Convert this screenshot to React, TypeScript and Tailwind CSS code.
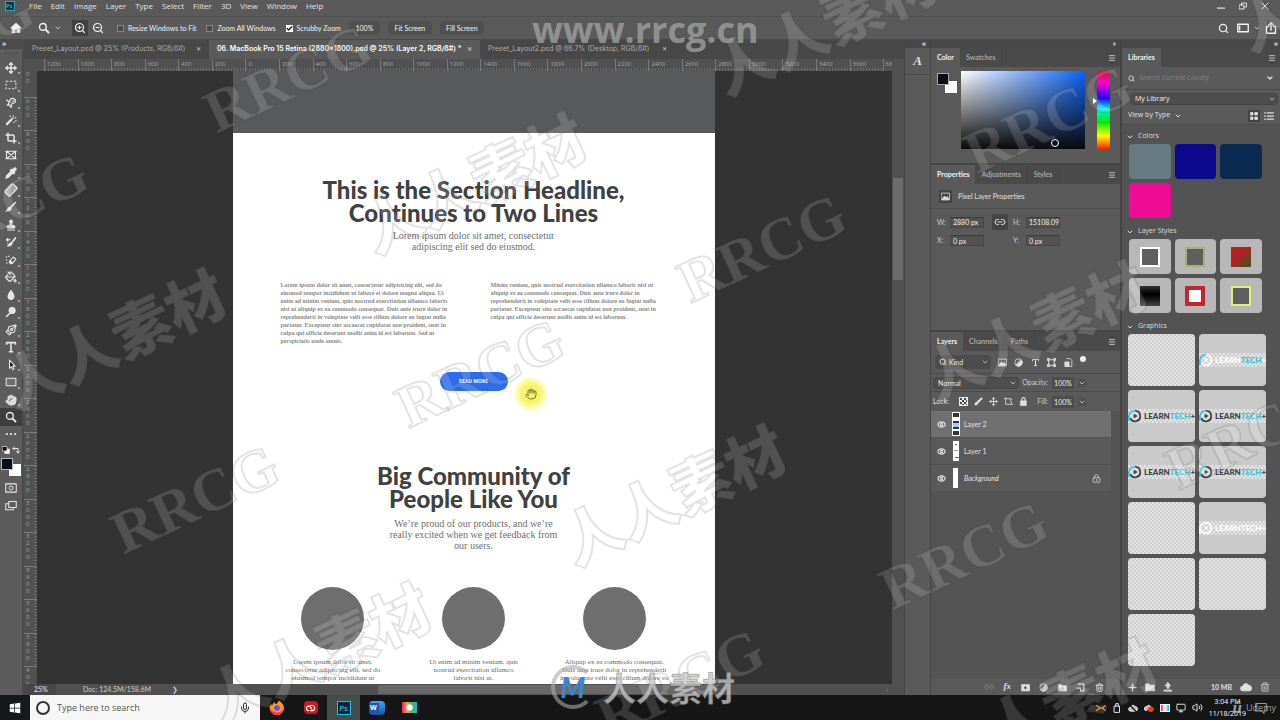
import type { ReactNode } from "react";
import {
  Bandage,
  Brush,
  Check,
  ChevronDown,
  Crop,
  Eye,
  Hand,
  Lasso,
  Link2,
  LockKeyhole,
  Menu,
  Mic,
  Monitor,
  Move,
  PaintBucket,
  PenTool,
  Pipette,
  Search,
  Stamp,
  Trash2,
  Type,
  Volume2,
  ZoomIn,
  ZoomOut,
} from "lucide-react";

const checker =
  "bg-[repeating-conic-gradient(#cdcdcd_0_25%,#e4e4e4_0_50%)] bg-[length:4px_4px]";

function Glyph({ children, className = "w-3 h-3" }: { children: ReactNode; className?: string }) {
  return (
    <svg
      aria-hidden
      viewBox="0 0 16 16"
      className={className}
      fill="none"
      stroke="currentColor"
      strokeWidth={1.4}
      strokeLinecap="round"
      strokeLinejoin="round"
    >
      {children}
    </svg>
  );
}

const tools: { name: string; icon: ReactNode; flat?: boolean }[] = [
  { name: "Move", icon: <Move className="w-3 h-3" strokeWidth={2.8} /> },
  { name: "Marquee", icon: <Glyph><path strokeDasharray="3 2" strokeLinecap="butt" d="M1.5 3h13v10h-13z" /></Glyph> },
  {
    name: "Lasso",
    icon: (
      <Glyph>
        <path strokeWidth={1.6} d="M2 4l4 3 1-4c3-2 7-1 7 2s-3 4-5 3M6 7l-3 4 3-.5L8 14l1-4M10 5.500l2-.5" />
      </Glyph>
    ),
  },
  {
    name: "Magic Wand",
    icon: (
      <Glyph>
        <path strokeWidth={3} d="M2.5 13.5 8 8" />
        <path strokeWidth={2} d="M9 7l1.500-1.500M11 2.500v.1M14 5v.1M14.500 9v.1M7 3v.1M12 11v.1" />
      </Glyph>
    ),
  },
  { name: "Crop", icon: <Crop className="w-3 h-3" strokeWidth={3} /> },
  { name: "Frame", flat: true, icon: <Glyph><path d="M2 3h12v10H2zM2 3l12 10M14 3 2 13M1 3h14M1 13h14" /></Glyph> },
  { name: "Eyedropper", icon: <Pipette className="w-3 h-3" fill="currentColor" strokeWidth={2.6} /> },
  { name: "Healing Brush", icon: <Bandage className="w-3.5 h-3.5 -rotate-45" fill="#aaa" strokeWidth={2} /> },
  {
    name: "Brush",
    icon: (
      <Glyph>
        <path strokeWidth={2.2} d="M14 2 7.500 8.500" />
        <path fill="currentColor" d="M6.500 8.500c1.500.5 2 1.500 1 3-1.200 1.700-4 2-6 1.800 1.700-.8 1.500-4.200 5-4.800z" />
      </Glyph>
    ),
  },
  { name: "Clone Stamp", icon: <Stamp className="w-3 h-3" fill="currentColor" strokeWidth={2} /> },
  {
    name: "History Brush",
    icon: (
      <Glyph>
        <path strokeWidth={2.2} d="M14 2.500 9 9" />
        <path fill="currentColor" d="M8 9c1.500.5 1.500 2 .5 3-1 1-3 1.500-5 1.300C5 12 5 9.500 8 9z" />
        <path d="M2 5h5M2 5l2-1.800M2 5l2 1.800M3 9.500v.1" />
      </Glyph>
    ),
  },
  {
    name: "Eraser",
    icon: (
      <Glyph>
        <path d="M7 8.500 11 4l3.500 3-4.500 5.500H7.500L6 11z" />
        <path fill="currentColor" d="M7 8.500 10 12l-1 1H7.500L5.500 11z" />
        <path strokeWidth={2} d="M2 4v.1M5 3v.1M2 8v.1M2.500 12v.1" />
      </Glyph>
    ),
  },
  { name: "Paint Bucket", icon: <PaintBucket className="w-3 h-3" strokeWidth={2.4} /> },
  { name: "Blur", icon: <Glyph><path fill="currentColor" d="M8 2c2 3 4 5 4 7.800A4 4 0 0 1 8 14a4 4 0 0 1-4-4.200C4 7 6 5 8 2z" /></Glyph> },
  {
    name: "Dodge",
    icon: (
      <Glyph>
        <circle cx="9.500" cy="6" r="4" fill="currentColor" />
        <path strokeWidth={2} d="M6 10l-4 4" />
      </Glyph>
    ),
  },
  { name: "Pen", icon: <PenTool className="w-3 h-3 rotate-90" strokeWidth={2.2} /> },
  {
    name: "Type",
    icon: (
      <Glyph className="w-3.5 h-3.5">
        <path strokeWidth={1.8} strokeLinecap="butt" d="M3 5.500V3h10v2.500M8 3v10.500M5.500 13.500h5" />
      </Glyph>
    ),
  },
  { name: "Path Selection", icon: <Glyph><path fill="#222" d="M6 1.500v11l2.500-2.300 1.700 4 1.800-.8-1.700-3.900H13.500z" /></Glyph> },
  { name: "Rectangle", icon: <Glyph><path fill="#6f6f6f" d="M1.500 3h13v10h-13z" /></Glyph> },
  { name: "Hand", icon: <Hand className="w-3 h-3" fill="#ddd" stroke="#ddd" /> },
  {
    name: "Zoom",
    flat: true,
    icon: (
      <Glyph>
        <circle cx="6.500" cy="6.500" r="4.500" strokeWidth={1.8} />
        <path strokeWidth={2.6} d="M10.500 10.500 14 14" />
      </Glyph>
    ),
  },
];

const menus = ["File", "Edit", "Image", "Layer", "Type", "Select", "Filter", "3D", "View", "Window", "Help"];

const rulerX = [
  1200, 1000, 800, 600, 400, 200, 0, 200, 400, 600, 800, 1000, 1200, 1400, 1600, 1800, 2000, 2200, 2400, 2600,
  2800, 3000, 3200, 3400, 3600,
];
const rulerY = [
  600, 800, 1000, 1200, 1400, 1600, 1800, 2000, 2200, 2400, 2600, 2800, 3000, 3200, 3400, 3600, 3800,
];

const leftCopy = [
  "Lorem ipsum dolor sit amet, consectetur adipisicing elit, sed do",
  "eiusmod tempor incididunt ut labore et dolore magna aliqua. Ut",
  "enim ad minim veniam, quis nostrud exercitation ullamco laboris",
  "nisi ut aliquip ex ea commodo consequat. Duis aute irure dolor in",
  "reprehenderit in voluptate velit esse cillum dolore eu fugiat nulla",
  "pariatur. Excepteur sint occaecat cupidatat non proident, sunt in",
  "culpa qui officia deserunt mollit anim id est laborum. Sed ut",
  "perspiciatis unde omnis.",
];
const rightCopy = [
  "Minim veniam, quis nostrud exercitation ullamco laboris nisi ut",
  "aliquip ex ea commodo consequat. Duis aute irure dolor in",
  "reprehenderit in voluptate velit esse cillum dolore eu fugiat nulla",
  "pariatur. Excepteur sint occaecat cupidatat non proident, sunt in",
  "culpa qui officia deserunt mollit anim id est laborum.",
];
const people = [
  ["Lorem ipsum dolor sit amet,", "consectetur adipiscing elit, sed do", "eiusmod tempor incididunt ut"],
  ["Ut enim ad minim veniam, quis", "nostrud exercitation ullamco", "laboris nisi ut."],
  ["Aliquip ex ea commodo consequat.", "Duis aute irure dolor in reprehenderit", "in voluptate velit esse cillum dolore eu"],
];

const marks = [
  { text: "RRCG", place: "left-[288px] top-[78px]" },
  { text: "RRCG", place: "left-[4px] top-[207px]" },
  { text: "RRCG", place: "left-[-50px] top-[42px]" },
  { text: "RRCG", place: "left-[762px] top-[248px]" },
  { text: "RRCG", place: "left-[480px] top-[373px]" },
  { text: "RRCG", place: "left-[195px] top-[499px]" },
  { text: "RRCG", place: "left-[964px] top-[555px]" },
  { text: "RRCG", place: "left-[1048px] top-[119px]" },
  { text: "RRCG", place: "left-[1250px] top-[435px]" },
  { text: "RRCG", place: "left-[680px] top-[683px]" },
  { text: "人人素材", place: "left-[826px] top-[28px]" },
  { text: "人人素材", place: "left-[115px] top-[342px]" },
  { text: "人人素材", place: "left-[475px] top-[186px]" },
  { text: "人人素材", place: "left-[675px] top-[498px]" },
  { text: "人人素材", place: "left-[320px] top-[656px]" },
  { text: "人人素材", place: "left-[1036px] top-[334px]" },
  { text: "人人素材", place: "left-[1046px] top-[712px]" },
  { text: "人人素材", place: "left-[1350px] top-[-16px]" },
];

function Lines({ rows }: { rows: string[] }) {
  return (
    <>
      {rows.map((row) => (
        <span key={row} className="block whitespace-nowrap">
          {row}
        </span>
      ))}
    </>
  );
}

function Tabs({ items, menu = true }: { items: string[]; menu?: boolean }) {
  return (
    <div className="flex h-[19px] shrink-0 bg-[#4a4a4a] text-[7px]">
      {items.map((item, i) => (
        <button
          key={item}
          className={
            i === 0
              ? "bg-[#5a5a5a] px-1.5 font-bold text-[#f2f2f2]"
              : "border-r border-[#444] px-1.5 font-bold text-[#a5a5a5]"
          }
        >
          {item}
        </button>
      ))}
      {menu && (
        <button aria-label="Panel menu" className="ml-auto px-1 text-[#bbb]">
          <Menu className="h-2 w-2" strokeWidth={3} />
        </button>
      )}
    </div>
  );
}

function Option({ label, checked = false }: { label: string; checked?: boolean }) {
  return (
    <label className="flex items-center gap-1">
      <span className="relative h-[7px] w-[7px]">
        <input
          type="checkbox"
          defaultChecked={checked}
          className="peer block h-[7px] w-[7px] appearance-none border border-[#868686] bg-[#4b4b4b] checked:border-white checked:bg-white"
        />
        <Check
          className="pointer-events-none absolute inset-0 hidden h-[7px] w-[7px] text-[#222] peer-checked:block"
          strokeWidth={5}
        />
      </span>
      {label}
    </label>
  );
}

function Dropdown({ label, value, className }: { label: string; value: string; className: string }) {
  return (
    <span className={`relative flex items-center ${className}`}>
      <select
        aria-label={label}
        className="h-3 w-full appearance-none rounded-sm border border-[#454545] bg-[#4e4e4e] pl-1 leading-[10px] text-[#eee]"
      >
        <option>{value}</option>
      </select>
      <ChevronDown className="pointer-events-none absolute right-0.5 h-2 w-2 text-[#ccc]" strokeWidth={2.5} />
    </span>
  );
}

function Percent({ label }: { label: string }) {
  return (
    <label className="ml-auto flex items-center gap-1 text-[#ccc]">
      {label}
      <input defaultValue="100%" className="h-3 w-[22px] bg-[#4c4c4c] text-center text-[#eee]" />
      <span className="bg-[#505050]">
        <ChevronDown className="h-2 w-2" strokeWidth={2.5} />
      </span>
    </label>
  );
}

function Field({ label, value }: { label: string; value: string }) {
  return (
    <label className="flex items-center text-[#ccc]">
      <span className="w-[13px]">{label}</span>
      <input
        defaultValue={value}
        className="h-[11px] w-[34px] border border-[#484848] border-t-[#3c3c3c] bg-[#525252] pl-0.5 text-[#eee]"
      />
    </label>
  );
}

function Brand({ tone }: { tone: "dark" | "light" | "white" }) {
  const word = tone === "dark" ? "text-[#3b3f47]" : "text-white";
  const accent = tone === "white" ? "text-white" : "text-[#3cc3d9]";
  return (
    <div className={`flex h-3.5 items-center overflow-hidden text-[8px] font-black ${checker}`}>
      <svg aria-hidden viewBox="0 0 16 16" className={`mr-0.5 h-3.5 w-3.5 shrink-0 ${word}`}>
        <path d="M8 2a6 6 0 1 1-5.500 8.500" fill="none" stroke="currentColor" strokeWidth="2" />
        <path d="M1 14V8a7 7 0 0 1 7-6" fill="none" className={accent} stroke="currentColor" strokeWidth="2" />
        <path d="M6.500 5.500v5L11 8z" fill="currentColor" />
      </svg>
      <span className={word}>LEARN</span>
      <span className={accent}>TECH</span>
      <span className={word}>+</span>
    </div>
  );
}

function Tile({ kind }: { kind: string }) {
  if (kind === "empty") return <button aria-label="Graphic" className={`h-[52px] rounded-sm ${checker}`} />;
  return (
    <button className="flex h-[52px] flex-col justify-center overflow-hidden rounded-sm bg-[#cacaca]">
      <Brand tone={kind as "dark" | "light" | "white"} />
    </button>
  );
}

function SectionTitle({ children }: { children: ReactNode }) {
  return (
    <h3 className="flex h-[15px] items-center gap-1 pl-1 text-[7px] text-[#ddd]">
      <ChevronDown className="h-2 w-2" strokeWidth={3} />
      {children}
    </h3>
  );
}

function Toolbar() {
  return (
    <aside className="flex w-6 shrink-0 flex-col border-r-2 border-[#4b4b4b] bg-[#5c5c5c] text-[#e6e6e6]">
      <div className="h-[9px] bg-[#4b4b4b] pl-0.5 text-[7px] leading-[8px] font-bold">»</div>
      <div className="mx-auto mt-1 h-[6px] w-3 border-t border-dotted border-[#444]" />
      <div className="flex h-[367px] flex-col">
        {tools.map((tool) => (
          <button
            key={tool.name}
            aria-label={tool.name}
            className={
              "relative flex flex-1 items-center justify-center " + (tool.name === "Zoom" ? "bg-[#3f3f3f]" : "")
            }
          >
            {tool.icon}
            {!tool.flat && <i className="absolute right-0.5 bottom-0.5 h-0.5 w-0.5 bg-[#a5a5a5]" />}
          </button>
        ))}
      </div>
      <button aria-label="More tools" className="flex h-4 items-center justify-center">
        <Glyph><path strokeWidth={3} d="M2.500 8v.1M8 8v.1M13.500 8v.1" /></Glyph>
      </button>
      <div className="mt-0.5 flex h-3 items-center justify-between px-0.5">
        <Glyph className="h-2 w-2">
          <path fill="#fff" d="M6 6h9v9H6z" />
          <path fill="#111" d="M1 1h9v9H1z" />
        </Glyph>
        <Glyph className="h-2 w-2"><path strokeWidth={2} d="M2 5h10v9M5 2 2 5l3 3M9 11l3 3 3-3" /></Glyph>
      </div>
      <div className="relative ml-px h-5 w-5">
        <span className="absolute right-0 bottom-0 h-3 w-3 bg-white" />
        <span className="absolute top-0.5 left-0 h-3 w-3 border border-[#bbb] bg-[#0b0f1c]" />
      </div>
      <button aria-label="Quick mask" className="mt-1 flex h-4 items-center justify-center">
        <Glyph>
          <path d="M1 2.500h14v11H1z" />
          <circle cx="8" cy="8" r="2.500" strokeDasharray="1.500 1.500" />
        </Glyph>
      </button>
      <button aria-label="Screen mode" className="flex h-5 items-center justify-center">
        <Glyph><path d="M5 2h10v8H5zM5 5H1v8h10v-3" /></Glyph>
      </button>
    </aside>
  );
}

function Artboard() {
  return (
    <article className="w-[482px] shrink-0 bg-white text-center [font-variant-ligatures:none]">
      <div className="h-[62px] bg-[#58595b]" />
      <h2 className="mt-[45px] font-['Lato'] text-[24px] leading-[23px] font-black text-[#414141]">
        This is the Section Headline,
        <br />
        Continues to Two Lines
      </h2>
      <p className="mt-1.5 font-['Liberation_Serif'] text-[10px] leading-[11px] text-[#6e6e6e]">
        Lorem ipsum dolor sit amet, consectetur
        <br />
        adipiscing elit sed do eiusmod.
      </p>
      <div className="mt-[29px] grid grid-cols-2 pr-[14px] pl-12 text-left font-['Liberation_Serif'] text-[6px] leading-[8px] font-bold text-[#8a8a8a]">
        <p>
          <Lines rows={leftCopy} />
        </p>
        <p>
          <Lines rows={rightCopy} />
        </p>
      </div>
      <button className="mx-auto mt-[27px] block h-[19px] w-[68px] rounded-full bg-[#2d6cf0] text-[5px] font-bold text-white">
        READ MORE
      </button>
      <h2 className="mt-[73px] font-['Lato'] text-[24px] leading-[23px] font-black text-[#414141]">
        Big Community of
        <br />
        People Like You
      </h2>
      <p className="mt-2 font-['Liberation_Serif'] text-[10px] leading-[11px] text-[#6e6e6e]">
        We’re proud of our products, and we’re
        <br />
        really excited when we get feedback from
        <br />
        our users.
      </p>
      <div className="mt-9 grid grid-cols-3 px-[30px] font-['Liberation_Serif'] text-[7px] leading-[8px] text-[#666]">
        {people.map((rows) => (
          <div key={rows[0]} className="flex flex-col items-center">
            <div className="mb-2 h-[63px] w-[63px] rounded-full bg-[#6e6e6e]" />
            <Lines rows={rows} />
          </div>
        ))}
      </div>
    </article>
  );
}

function Document() {
  return (
    <main className="flex min-w-0 flex-1 flex-col">
      <div className="flex h-[19px] shrink-0 bg-[#484848] font-['Inter'] text-[7px] text-[#a8a8a8]">
        <button className="flex w-[185px] items-center justify-between pr-2 pl-2 whitespace-nowrap">
          Preset_Layout.psd @ 25% (Products, RGB/8#) <b>×</b>
        </button>
        <button className="flex w-[271px] items-center justify-between bg-[#5a5a5a] pr-2 pl-2 font-semibold whitespace-nowrap text-white">
          06. MacBook Pro 15 Retina (2880x1800).psd @ 25% (Layer 2, RGB/8#) * <b className="text-[#aaa]">×</b>
        </button>
        <button className="flex w-[195px] items-center justify-between pr-2 pl-2 whitespace-nowrap">
          Preset_Layout2.psd @ 66.7% (Desktop, RGB/8#) <b>×</b>
        </button>
      </div>
      <div className="flex h-3 shrink-0 bg-[#515151] pr-3 pl-5 text-[6px] leading-[11px] text-[#a3a3a3]">
        {rulerX.map((n, i) => (
          <span
            key={i}
            className="flex-1 border-l border-[#7a7a7a] bg-[repeating-linear-gradient(90deg,#6c6c6c_0_1px,transparent_1px_3px)] bg-[length:100%_3px] bg-bottom bg-no-repeat pl-0.5"
          >
            {n}
          </span>
        ))}
        <span className="w-[9px] overflow-hidden border-l border-[#7a7a7a] pl-px">3800</span>
      </div>
      <div className="flex min-h-0 flex-1">
        <div className="flex w-[13px] shrink-0 flex-col overflow-hidden bg-[#515151] text-[6px] leading-[7px] text-[#a3a3a3]">
          <span className="h-[26px] w-1 pl-0.5 break-all">00</span>
          {rulerY.map((n) => (
            <span
              key={n}
              className="flex-1 overflow-hidden border-t border-[#7a7a7a] bg-[repeating-linear-gradient(#6c6c6c_0_1px,transparent_1px_3px)] bg-[length:3px_100%] bg-right bg-no-repeat pl-0.5"
            >
              <span className="block w-1 break-all">{n}</span>
            </span>
          ))}
          <span className="h-[18px] overflow-hidden border-t border-[#7a7a7a] pl-0.5">
            <span className="block w-1 break-all">4000</span>
          </span>
        </div>
        <div className="flex min-w-0 flex-1 justify-center overflow-hidden bg-[#333] pl-[18px]">
          <Artboard />
        </div>
        <div className="w-3 shrink-0 bg-[#505050] px-px pt-[107px]">
          <div className="h-[102px] bg-[#6c6c6c]" />
        </div>
      </div>
      <div className="flex h-[11px] shrink-0 items-center bg-[#505050] font-['Lato'] text-[7px] text-[#ccc]">
        <span className="w-8 bg-[#474747] pl-2.5 leading-[11px] font-bold">25%</span>
        <span className="w-[90px] pl-[27px] whitespace-nowrap">Doc: 124.5M/158.6M</span>
        <span className="w-[232px] pl-[26px]">❯</span>
        <span className="h-[9px] w-[335px] bg-[#696969]" />
        <span className="mr-4 ml-auto text-[#999]">›</span>
      </div>
    </main>
  );
}

function Panels() {
  const iconRow = "h-[9px] w-[9px] shrink-0";
  return (
    <aside className="flex w-[192px] shrink-0 flex-col border-r-2 border-l border-[#444] bg-[#5a5a5a] font-['Lato'] text-[7px] text-[#e0e0e0]">
      <div className="h-2 bg-[#484848] pr-1 text-right leading-[7px] font-bold">»</div>
      <section className="h-[117px] border-b-2 border-[#464646]">
        <Tabs items={["Color", "Swatches"]} />
        <div className="flex px-1.5 pt-1">
          <div className="relative mt-0.5 h-5 w-5">
            <span className="absolute right-0 bottom-0 h-3 w-3 bg-white" />
            <span className="absolute top-0 left-0 h-3 w-3 border border-[#aaa] bg-[#0b0d16]" />
          </div>
          <div className="relative ml-1 h-[78px] flex-1 bg-[linear-gradient(to_top,#0a0a0a,transparent),linear-gradient(to_right,#fff,#0a62f5)]">
            <i className="absolute right-[26px] bottom-0.5 h-2 w-2 rounded-full border border-white" />
          </div>
          <div className="flex w-3 items-start justify-end pt-[27px]">
            <i className="border-y-3 border-l-4 border-y-transparent border-l-white" />
          </div>
          <div className="mr-1 h-[78px] w-[13px] bg-[linear-gradient(#e0103a,#f0c_15%,#20f_35%,#0ee_48%,#0e0_66%,#ff0_83%,#f20)]" />
        </div>
      </section>
      <section className="h-[167px] border-b-2 border-[#464646]">
        <Tabs items={["Properties", "Adjustments", "Styles"]} />
        <div className="flex h-[25px] items-center gap-1.5 border-b border-[#4e4e4e] pl-2">
          <span className="bg-[#444] p-0.5">
            <Glyph className="h-[9px] w-[9px]">
              <path d="M1 2h14v12H1z" />
              <path fill="currentColor" d="M2 13l4-6 3 3 2-2 3 5z" />
            </Glyph>
          </span>
          Pixel Layer Properties
        </div>
        <div className="flex h-[26px] items-center pl-1.5">
          <Field label="W:" value="2880 px" />
          <button aria-label="Link size" className="mr-[5px] ml-2 flex h-4 w-4 items-center justify-center bg-[#454545]">
            <Link2 className="h-3 w-3" />
          </button>
          <Field label="H:" value="15108.09 px" />
        </div>
        <div className="flex items-center gap-[29px] pl-1.5">
          <Field label="X:" value="0 px" />
          <Field label="Y:" value="0 px" />
        </div>
      </section>
      <section className="flex min-h-0 flex-1 flex-col bg-[#545454]">
        <Tabs items={["Layers", "Channels", "Paths"]} />
        <div className="flex h-[22px] shrink-0 items-center bg-[#5a5a5a] pr-[34px] pl-1">
          <span className="relative flex w-[56px] items-center">
            <Search className="pointer-events-none absolute left-1 z-10 h-2 w-2" strokeWidth={3} />
            <select
              aria-label="Filter"
              className="h-3.5 w-full appearance-none rounded-sm bg-[#4c4c4c] pl-3.5 text-[#eee]"
            >
              <option>Kind</option>
            </select>
            <ChevronDown className="pointer-events-none absolute right-0.5 h-2 w-2" />
          </span>
          <span className="flex flex-1 items-center justify-between pl-[7px]">
            <Glyph className={iconRow}>
              <path d="M1 2h14v12H1z" />
              <path fill="currentColor" d="M2 13l4-6 3 3 2-2 3 5z" />
            </Glyph>
            <Glyph className={iconRow}>
              <circle cx="8" cy="8" r="6.500" />
              <path fill="currentColor" d="M12.600 3.400A6.500 6.500 0 0 1 3.400 12.600z" />
            </Glyph>
            <Type className={iconRow} strokeWidth={3} />
            <Glyph className={iconRow}><path strokeWidth={1.800} d="M3 3h10v10H3zM1 1h3v3H1zM12 1h3v3h-3zM1 12h3v3H1zM12 12h3v3h-3z" /></Glyph>
            <Glyph className={iconRow}>
              <path d="M5 1h6l3 3v11H7" />
              <path fill="currentColor" d="M2 7h7v8H2z" />
            </Glyph>
            <i className="mb-1.5 h-1.5 w-1.5 rounded-full bg-[#eee]" />
          </span>
        </div>
        <div className="flex h-[19px] shrink-0 items-center border-y border-[#4c4c4c] bg-[#5a5a5a] pr-[34px] pl-0.5">
          <Dropdown label="Blend mode" value="Normal" className="w-[86px]" />
          <Percent label="Opacity:" />
        </div>
        <div className="flex h-[19px] shrink-0 items-center bg-[#5a5a5a] pr-[34px] pl-0.5">
          Lock:
          <span className="ml-2.5 flex items-center gap-1.5">
            <i className="h-[9px] w-[9px] border border-[#eee] bg-[repeating-conic-gradient(#eee_0_25%,#444_0_50%)] bg-[length:4px_4px]" />
            <Brush className={iconRow} fill="currentColor" />
            <Move className={iconRow} strokeWidth={2.5} />
            <Glyph className={iconRow}><path d="M3 1v12h12M1 3h9l4 9M11 2l3 3" /></Glyph>
            <Glyph className={iconRow}>
              <path fill="currentColor" d="M3 7h10v8H3z" />
              <path strokeWidth={2} d="M5 7V4a3 3 0 0 1 6 0v3" />
            </Glyph>
          </span>
          <Percent label="Fill:" />
        </div>
        <ul className="pr-[9px]">
          {["Layer 2", "Layer 1", "Background"].map((name, i) => (
            <li
              key={name}
              className={
                "flex h-[27px] items-center border-b border-[#525252] pl-1.5 " + (i === 0 ? "bg-[#707070]" : "bg-[#5a5a5a]")
              }
            >
              <button aria-label={"Show " + name}>
                <Eye className="h-[9px] w-[9px]" strokeWidth={3} />
              </button>
              {i === 0 && (
                <span className="ml-1.5 flex h-6 w-2 flex-col justify-between border border-white bg-[#333] py-1">
                  <i className="h-1 bg-white" />
                  <i className="h-1 bg-[#a9c6ff]" />
                  <i className="h-0.5 bg-white" />
                </span>
              )}
              {i === 1 && (
                <span className="mr-px ml-[7px] flex h-5 w-1.5 flex-col justify-around bg-white">
                  <i className="mx-0.5 h-px bg-[#666]" />
                  <i className="mx-px h-px bg-[#999]" />
                  <i className="ml-0.5 h-px bg-[#666]" />
                </span>
              )}
              {i === 2 && <span className="mr-0.5 ml-[7px] h-5 w-[5px] bg-white" />}
              <span className={"ml-1 " + (i === 2 ? "italic" : "")}>{name}</span>
              {i === 2 && <LockKeyhole className="mr-2.5 ml-auto h-[9px] w-[9px]" />}
            </li>
          ))}
        </ul>
        <div className="mt-auto flex h-4 items-center justify-between bg-[#5a5a5a] pr-4 pl-[53px]">
          <Link2 className="h-2.5 w-2.5 text-[#888]" />
          <i className="font-['Liberation_Serif'] text-[9px] font-bold">fx</i>
          <Glyph className={iconRow}>
            <path fill="currentColor" d="M1 3h14v11H1z" />
            <circle cx="8" cy="8.500" r="3" fill="#444" />
          </Glyph>
          <Glyph className={iconRow}>
            <circle cx="8" cy="8" r="6.500" />
            <path fill="currentColor" d="M12.600 3.400A6.500 6.500 0 0 1 3.400 12.600z" />
          </Glyph>
          <Glyph className={iconRow}><path fill="currentColor" d="M1 3h5l1.500 2H15v9H1z" /></Glyph>
          <Glyph className={iconRow}><path strokeWidth={2} d="M4 2h10v12H8M2 9h6v5" /></Glyph>
          <Trash2 className={iconRow} strokeWidth={2.5} />
        </div>
      </section>
    </aside>
  );
}

function Libraries() {
  return (
    <aside className="flex w-[158px] shrink-0 flex-col bg-[#535353] text-[7px] text-[#e0e0e0]">
      <div className="h-2 bg-[#484848] pr-0.5 text-right leading-[7px] font-bold">»</div>
      <div className="font-['Lato']">
        <Tabs items={["Libraries"]} />
      </div>
      <div className="flex h-[23px] shrink-0 items-center gap-1 border-b border-[#4c4c4c] bg-[#5a5a5a] px-1.5">
        <Search className="h-[7px] w-[7px]" strokeWidth={3} />
        <input
          aria-label="Search Current Library"
          placeholder="Search Current Library"
          className="min-w-0 flex-1 italic placeholder:text-[#828282]"
        />
        <ChevronDown className="h-2 w-2" strokeWidth={4} />
      </div>
      <div className="flex h-[17px] shrink-0 items-center bg-[#5a5a5a] pr-0.5 pl-2">
        <Dropdown label="Library" value="My Library" className="w-full" />
      </div>
      <div className="flex h-[18px] shrink-0 items-center border-b border-[#4c4c4c] bg-[#5a5a5a] px-1.5">
        <button className="flex items-center gap-1">
          View by Type <ChevronDown className="h-2 w-2" strokeWidth={3} />
        </button>
        <button aria-label="Grid view" className="ml-auto bg-[#444] p-0.5">
          <Glyph className="h-2 w-2"><path fill="currentColor" d="M1 1h5v5H1zM10 1h5v5h-5zM1 10h5v5H1zM10 10h5v5h-5z" /></Glyph>
        </button>
        <button aria-label="List view" className="ml-1">
          <Glyph className="h-2.5 w-2.5"><path strokeWidth={2} d="M1 3h1M5 3h10M1 8h1M5 8h10M1 13h1M5 13h10" /></Glyph>
        </button>
      </div>
      <div className="min-h-0 flex-1 overflow-hidden pt-1">
        <SectionTitle>Colors</SectionTitle>
        <div className="grid grid-cols-3 gap-1 pr-[18px] pb-1.5 pl-[7px]">
          <button aria-label="Slate" className="h-[35px] rounded-sm bg-[#667b81]" />
          <button aria-label="Blue" className="h-[35px] rounded-sm bg-[#0b0a8c]" />
          <button aria-label="Navy" className="h-[35px] rounded-sm bg-[#0b2a52]" />
          <button aria-label="Pink" className="h-[35px] rounded-sm bg-[#ef0b93]" />
        </div>
        <SectionTitle>Layer Styles</SectionTitle>
        <div className="grid grid-cols-3 gap-1 pr-[18px] pb-1.5 pl-[7px]">
          {[
            "border-2 border-white bg-[#5f5f5f]",
            "border-2 border-[#a9ae78] bg-[#5f5f5f]",
            "bg-[linear-gradient(135deg,#b52020_40%,#2f5a23)]",
            "bg-[linear-gradient(#333,#000_40%,#111_60%,#444)]",
            "border-4 border-[#c1272d] bg-white",
            "border-2 border-[#e2f07a] bg-[#5f5f5f]",
          ].map((look) => (
            <button
              key={look}
              aria-label="Layer style"
              className="flex h-[35px] items-center justify-center rounded-sm bg-[#b8b8b8]"
            >
              <i className={`h-5 w-5 ${look}`} />
            </button>
          ))}
        </div>
        <SectionTitle>Graphics</SectionTitle>
        <div className="grid grid-cols-2 gap-1 pr-[14px] pl-1.5 font-['Lato']">
          {["empty", "light", "dark", "dark", "dark", "dark", "empty", "white", "empty", "empty", "empty"].map(
            (kind, i) => (
              <Tile key={i} kind={kind} />
            ),
          )}
        </div>
      </div>
      <div className="flex h-4 shrink-0 items-center gap-2 bg-[#5a5a5a] pr-2.5 pl-1.5">
        <Glyph className="h-[9px] w-[9px] shrink-0"><path strokeWidth={2.500} d="M8 2v12M2 8h12" /></Glyph>
        <Glyph className="h-[10px] w-[10px] shrink-0"><path fill="currentColor" d="M1 3h5l1.500 2H15v9H1z" /></Glyph>
        <Glyph className="h-[10px] w-[10px] shrink-0"><path fill="currentColor" d="M8 1l4 5H9.500v4h-3V6H4zM2 13h12v1.500H2z" /></Glyph>
        <span className="ml-auto font-['Lato'] font-bold">10 MB</span>
        <Glyph className="h-3 w-3 shrink-0"><path fill="currentColor" d="M4 13a3 3 0 0 1 0-6 4 4 0 0 1 7.500-1A3.500 3.500 0 0 1 12 13z" /></Glyph>
        <Trash2 className="h-[10px] w-[10px] shrink-0 text-[#b0b0b0]" strokeWidth={3} />
      </div>
    </aside>
  );
}

function Taskbar() {
  return (
    <footer className="flex h-[25px] shrink-0 bg-[#161616] text-white">
      <button aria-label="Start" className="flex w-[30px] items-center justify-center bg-[#15191c]">
        <svg viewBox="0 0 16 16" className="h-3 w-3" fill="currentColor">
          <path d="M1 3l6-1v5.500H1zM8 1.900 15 1v6.500H8zM1 8.500h6V14l-6-1zM8 8.500h7V15l-7-1z" />
        </svg>
      </button>
      <label className="flex w-[230px] items-center gap-[7px] bg-[#f6f6f6] pr-[9px] pl-1.5">
        <i className="h-3.5 w-3.5 rounded-full border-2 border-[#333]" />
        <input
          aria-label="Search"
          placeholder="Type here to search"
          className="min-w-0 flex-1 text-[9px] placeholder:text-[#555]"
        />
        <Mic className="h-3 w-3 text-[#333]" />
      </label>
      <nav className="flex items-center">
        <button aria-label="Firefox" className="flex w-[34px] justify-center">
          <svg viewBox="0 0 16 16" className="h-4 w-4">
            <path fill="#ff9a1f" d="M8 15A7 7 0 0 1 2 4l1 1.500L5 2l1.500 2C8 4 9 3 9.500.5c3.500 2 5.500 4.500 5.500 8A7 7 0 0 1 8 15z" />
            <path fill="#f0335b" d="M8 15a7 7 0 0 1-7-7c2 4 5 5 8 4.500 2.500-.5 4.500-2 5.500-4A7 7 0 0 1 8 15z" />
            <circle cx="8" cy="8" r="2.800" fill="#7b46d9" />
          </svg>
        </button>
        <button aria-label="Creative Cloud" className="flex w-[33px] justify-center">
          <span className="flex h-[13px] w-3.5 items-center justify-center rounded-sm bg-[#d9151c]">
            <Glyph className="h-3 w-3"><path d="M5 11.500a3 3 0 0 1 0-6c1.500 0 2 .8 3.500 2.500M7 5a3.500 3.500 0 1 1 4 6.500H7.500M8 8.500 9.500 10" /></Glyph>
          </span>
        </button>
        <button className="flex h-[25px] w-[33px] items-center justify-center bg-[#454a4b]">
          <span className="h-3.5 w-3.5 border border-[#25c3e8] bg-[#06283a] text-[8px] leading-[11px] text-[#4bd2f5]">Ps</span>
        </button>
        <button className="flex w-[33px] justify-center">
          <span className="flex h-3.5 w-4 items-center rounded-sm bg-[linear-gradient(#41a5ee,#2b7cd3_50%,#1a4da5)]">
            <b className="h-2.5 w-2.5 bg-[#1c56ad] text-center text-[7px] leading-[10px]">W</b>
          </span>
        </button>
        <button aria-label="Recorder" className="flex w-[33px] justify-center">
          <span className="flex h-[11px] w-[15px] items-center justify-center bg-[linear-gradient(90deg,#e6287a,#f5a623_35%,#2fc45a_65%,#1fb2d0)]">
            <i className="h-[7px] w-[7px] rounded-full border border-[#ddd] bg-white" />
          </span>
        </button>
      </nav>
      <div className="ml-auto flex items-center gap-1.5">
        <Glyph className="h-[10px] w-[10px] text-[#d98d2f]"><path strokeWidth={2} d="M1 4l5 4-5 4M15 4l-5 4 5 4M5 8h6" /></Glyph>
        <Glyph className="h-[10px] w-[10px]"><path d="M4 5h8v10H4zM6 5V1h4v4" /></Glyph>
        <Glyph className="h-[10px] w-[10px]"><path fill="#bbb" d="M4 13a3 3 0 0 1 0-6 4 4 0 0 1 7.500-1A3.500 3.500 0 0 1 12 13z" /><path stroke="#161616" strokeWidth={2} d="M2 2l12 13" /></Glyph>
        <Glyph className="h-[10px] w-[10px]"><path fill="#bbb" d="M3 12a3 3 0 0 1 1-6 4 4 0 0 1 7 0z" /><circle cx="11" cy="10" r="4" fill="#e2401c" stroke="#e2401c" /></Glyph>
        <span className="h-2 w-2.5 border border-white bg-[linear-gradient(90deg,#e6287a,#fff_50%,#1fb2d0)]" />
        <Monitor className="h-[10px] w-[10px]" />
        <Volume2 className="h-[11px] w-[11px]" />
        <time className="text-center text-[7px] leading-3">
          3:04 PM
          <br />
          11/18/2019
        </time>
      </div>
      <div className="relative flex w-[34px] items-center">
        <Glyph className="absolute right-[13px] h-3 w-3 text-[#999]"><path d="M1 2h14v10h-3v3l-3-3H1z" /></Glyph>
      </div>
    </footer>
  );
}

export default function App() {
  return (
    <div className="relative flex h-screen flex-col overflow-hidden bg-[#5a5a5a] font-['Open_Sans',sans-serif] text-[#e2e2e2]">
      {/* Menu bar */}
      <header className="flex h-[17px] shrink-0 items-center border-b border-[#505050] pb-1 text-[8px]">
        <span className="mr-[14px] ml-[5px] h-[10px] w-[10px] border border-[#27a7b8] bg-[#0a3440] text-[6px] leading-[8px] text-[#5fd8ea]">
          Ps
        </span>
        <nav className="flex gap-[9px]">
          {menus.map((m) => (
            <button key={m}>{m}</button>
          ))}
        </nav>
        <div className="ml-auto flex items-center gap-[14px] pr-[11px]">
          <Glyph className="h-2 w-2"><path strokeWidth={2.500} d="M1 12h14" /></Glyph>
          <Glyph className="h-2 w-2"><path strokeWidth={2} d="M1 6h9v8H1zM5 6V2h10v8h-5" /></Glyph>
          <Glyph className="h-2 w-2"><path strokeWidth={2} d="M2 2l12 12M14 2 2 14" /></Glyph>
        </div>
      </header>

      {/* Options bar */}
      <div className="flex h-[23px] shrink-0 items-center border-b border-[#4a4a4a] font-['Lato'] text-[7px] text-[#f2f2f2]">
        <button aria-label="Home" className="ml-2.5 w-[22px]">
          <Glyph><path fill="currentColor" d="M1.500 8 8 2l6.500 6H13v6H9.500v-4h-3v4H3V8z" /></Glyph>
        </button>
        <button className="flex w-[33px] items-center gap-1 pl-1.5" aria-label="Zoom presets">
          <Glyph className="h-3 w-3 shrink-0">
            <circle cx="6.500" cy="6.500" r="4.500" strokeWidth={1.8} />
            <path strokeWidth={2.6} d="M10.500 10.500 14 14" />
          </Glyph>
          <ChevronDown className="h-2 w-2" />
        </button>
        <button aria-label="Zoom in" className="ml-[7px] bg-[#414141] p-0.5">
          <ZoomIn className="h-3 w-3" strokeWidth={2.4} />
        </button>
        <button aria-label="Zoom out" className="ml-0.5 p-0.5">
          <ZoomOut className="h-3 w-3" strokeWidth={2.4} />
        </button>
        <div className="ml-[11px] flex items-center gap-2.5 whitespace-nowrap">
          <Option label="Resize Windows to Fit" />
          <Option label="Zoom All Windows" />
          <Option label="Scrubby Zoom" checked />
        </div>
        <div className="ml-2 flex gap-2">
          <button className="h-3.5 w-[31px] rounded-sm bg-[#505050]">100%</button>
          <button className="h-3.5 w-[44px] rounded-sm bg-[#505050]">Fit Screen</button>
          <button className="h-3.5 w-[44px] rounded-sm bg-[#505050]">Fill Screen</button>
        </div>
        <div className="ml-auto flex items-center gap-2 pr-[3px]">
          <Search className="h-[11px] w-[11px]" strokeWidth={2.500} />
          <Glyph className="h-3 w-3"><path strokeWidth={1.800} d="M1 3h14v10H1zM3.500 5.500v5" /></Glyph>
          <ChevronDown className="-mx-1 h-2 w-2" />
          <Glyph className="h-3 w-3"><path strokeWidth={1.800} d="M5 6H2v9h12V6h-3M8 11V1.500M5 4l3-3 3 3" /></Glyph>
        </div>
      </div>

      <div className="flex min-h-0 flex-1">
        <Toolbar />
        <Document />
        <div className="flex w-[26px] shrink-0 flex-col border-l border-[#444] bg-[#5a5a5a]">
          <div className="h-2 bg-[#484848] pr-1 text-right text-[7px] leading-[7px] font-bold">«</div>
          <button className="h-[27px] border-b border-[#4a4a4a] font-['Liberation_Serif'] text-[13px] font-bold italic">
            A
          </button>
        </div>
        <Panels />
        <Libraries />
      </div>

      <Taskbar />

      {/* Pointer with its highlight */}
      <div className="pointer-events-none absolute top-[376px] left-[513px] flex h-9 w-9 items-center justify-center rounded-full bg-[radial-gradient(#f4f04acc_35%,#fbf96a88_55%,transparent_72%)]">
        <Hand className="h-3 w-3 text-[#77752a]" />
      </div>

      {/* Watermark layer */}
      <div aria-hidden className="pointer-events-none absolute inset-0 overflow-hidden">
        {marks.map((mark) => (
          <span
            key={mark.place}
            className={`absolute -translate-x-1/2 -translate-y-1/2 -rotate-25 font-['Liberation_Serif','Noto_Sans_CJK_SC',sans-serif] text-[60px] leading-none font-black whitespace-nowrap text-white/15 [-webkit-text-stroke:2px_rgba(60,60,60,0.14)] ${mark.place}`}
          >
            {mark.text}
          </span>
        ))}
        <span className="absolute top-[6px] left-[532px] text-[36px] leading-[48px] font-bold text-[#a0a0a0]/80">
          www.rrcg.cn
        </span>
        <div className="absolute top-[665px] left-[551px] flex items-center gap-2">
          <span className="flex h-11 w-11 items-center justify-center rounded-full border-4 border-[#aaa]/60 border-r-transparent font-['Lato'] text-[28px] font-black text-[#3f86c8] italic">
            M
          </span>
          <span className="font-['Noto_Sans_CJK_SC',sans-serif] text-[33px] leading-10 font-bold text-[#c9c9c9]/80 [-webkit-text-stroke:1px_rgba(90,90,90,0.4)]">
            人人素材
          </span>
        </div>
        <div className="absolute right-1 bottom-1 flex items-center gap-1 text-[9px] text-[#c4c4c4]/80">
          <span className="font-['Liberation_Serif'] text-[17px] leading-4 font-bold italic">û</span>
          Udemy
        </div>
      </div>
    </div>
  );
}
